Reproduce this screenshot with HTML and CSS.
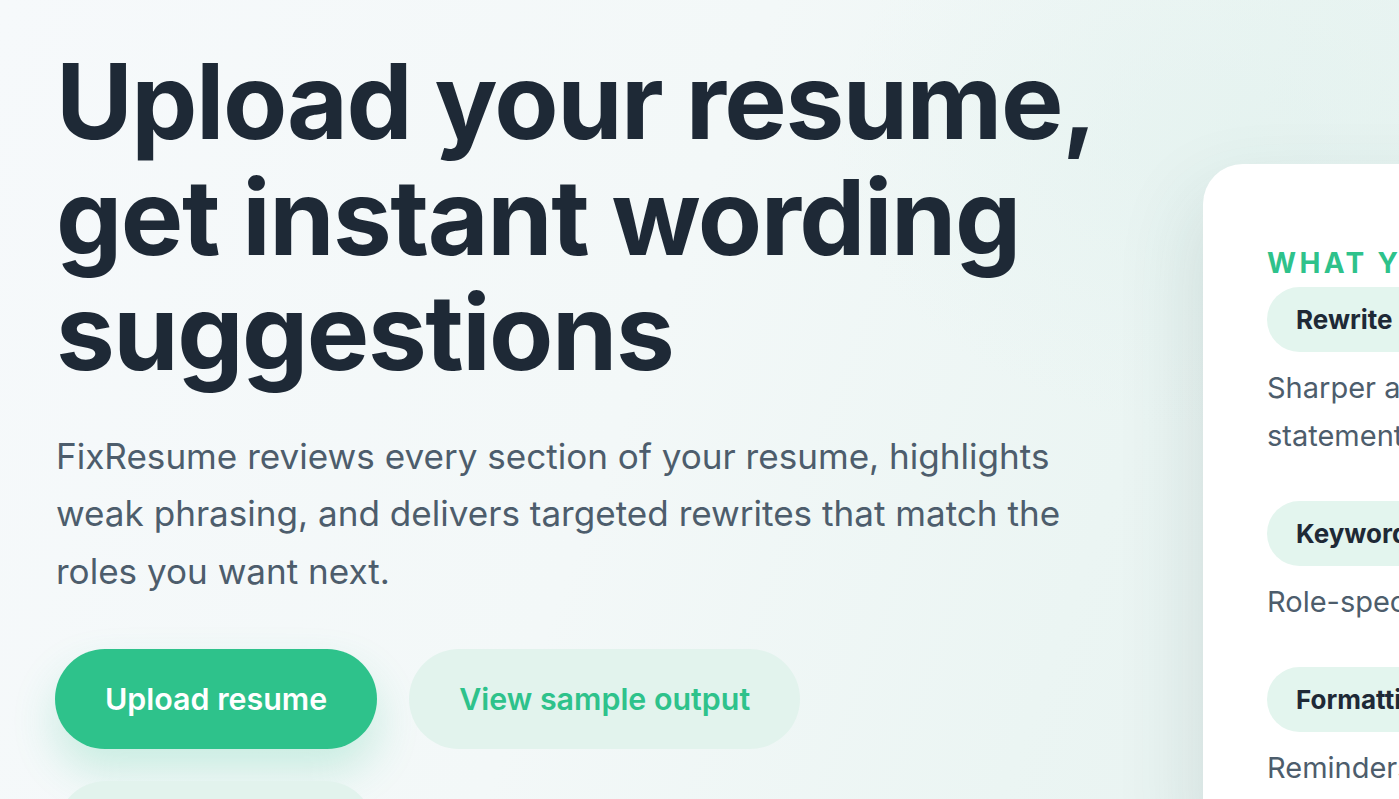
FILE: index.html
```html
<!DOCTYPE html>
<html lang="en">
<head>
<meta charset="utf-8">
<title>FixResume</title>
<link rel="stylesheet" href="styles.css">
</head>
<body>
<main class="page">
  <section class="hero">
    <div class="hero-copy">
      <h1 class="hero-title">Upload your resume, get instant wording suggestions</h1>
      <p class="hero-lead">FixResume reviews every section of your resume, highlights weak phrasing, and delivers targeted rewrites that match the roles you want next.</p>
      <div class="hero-actions">
        <a class="btn btn-primary" href="#">Upload resume</a>
        <a class="btn btn-soft" href="#">View sample output</a>
        <a class="btn btn-soft" href="#">Try a free scan</a>
      </div>
    </div>
    <aside class="card">
      <p class="card-eyebrow">What you get</p>
      <ul class="feature-list">
        <li class="feature">
          <span class="feature-pill">Rewrite suggestions</span>
          <p class="feature-text">Sharper action verbs and statements that stand out.</p>
        </li>
        <li class="feature">
          <span class="feature-pill">Keyword alignment</span>
          <p class="feature-text">Role-specific keywords.</p>
        </li>
        <li class="feature">
          <span class="feature-pill">Formatting checks</span>
          <p class="feature-text">Reminders for layout.</p>
        </li>
      </ul>
    </aside>
  </section>
</main>
</body>
</html>
```

FILE: styles.css
```css
* { box-sizing: border-box; }

html, body {
  margin: 0;
  padding: 0;
}

body {
  font-family: Inter, "Noto Sans", "Liberation Sans", sans-serif;
  color: #1e2936;
  background: #f3f8f8;
  overflow: hidden;
}

.page {
  min-height: 100vh;
  overflow: hidden;
  background:
    radial-gradient(ellipse 600px 420px at 1250px 140px, rgba(222, 240, 236, 0.45), rgba(222, 240, 236, 0) 70%),
    linear-gradient(110deg, #f6f9fb 0%, #f3f8f8 45%, #ebf5f3 75%, #e7f2f0 100%);
}

.hero {
  display: flex;
  align-items: flex-start;
  gap: 67px;
  padding: 43px 0 0 56px;
}

.hero-copy {
  flex: 0 0 1080px;
  width: 1080px;
}

.hero-title {
  margin: 0;
  font-size: 105px;
  line-height: 1.1;
  font-weight: 700;
  letter-spacing: -1.5px;
  color: #1e2936;
}

.hero-lead {
  margin: 38px 0 0;
  font-size: 35.1px;
  line-height: 57.8px;
  color: #4d5d6c;
  max-width: 1060px;
}

.hero-actions {
  display: flex;
  flex-wrap: wrap;
  gap: 32px;
  margin-top: 48px;
}

.btn {
  display: inline-flex;
  align-items: center;
  justify-content: center;
  height: 100px;
  padding: 0 50px;
  border-radius: 50px;
  font-size: 30.4px;
  font-weight: 600;
  text-decoration: none;
}

.btn-primary {
  margin-left: -1px;
  background: #2ec28b;
  color: #ffffff;
  box-shadow: 0 22px 44px rgba(46, 194, 139, 0.22);
}

.btn-soft {
  background: #e2f3ed;
  color: #2ec28b;
}

.card {
  flex: 0 0 560px;
  margin-top: 121px;
  background: #ffffff;
  border-radius: 40px;
  padding: 83px 64px 60px 64px;
  box-shadow: -10px 30px 80px rgba(40, 80, 80, 0.12);
}

.card-eyebrow {
  margin: 0;
  font-size: 28px;
  line-height: 1.2;
  font-weight: 700;
  letter-spacing: 0.12em;
  text-transform: uppercase;
  color: #2ec28b;
  white-space: nowrap;
}

.feature-list {
  list-style: none;
  margin: 6px 0 0;
  padding: 0;
  display: flex;
  flex-direction: column;
  gap: 41px;
}

.feature-pill {
  display: inline-block;
  height: 65px;
  line-height: 65px;
  padding: 0 29px;
  border-radius: 33px;
  background: #e3f5ee;
  font-size: 26px;
  font-weight: 700;
  color: #1e2936;
  white-space: nowrap;
}

.feature-text {
  margin: 12px 0 0;
  font-size: 29px;
  line-height: 48px;
  color: #4d5d6c;
}
```
